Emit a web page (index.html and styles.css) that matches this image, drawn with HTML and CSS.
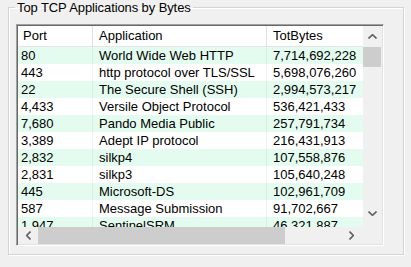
FILE: index.html
```html
<!DOCTYPE html>
<html lang="en">
<head>
    <meta charset="UTF-8">
    <title>Top TCP Applications by Bytes</title>
    <link rel="stylesheet" href="styles.css">
</head>
<body>
    <fieldset class="group">
        <legend>Top TCP Applications by Bytes</legend>
        <div class="list">
            <div class="table-area">
                <div class="row head">
                    <div class="cell">Port</div>
                    <div class="cell">Application</div>
                    <div class="cell">TotBytes</div>
                </div>
                <div class="row"><div class="cell">80</div><div class="cell">World Wide Web HTTP</div><div class="cell">7,714,692,228</div></div>
                <div class="row"><div class="cell">443</div><div class="cell">http protocol over TLS/SSL</div><div class="cell">5,698,076,260</div></div>
                <div class="row"><div class="cell">22</div><div class="cell">The Secure Shell (SSH)</div><div class="cell">2,994,573,217</div></div>
                <div class="row"><div class="cell">4,433</div><div class="cell">Versile Object Protocol</div><div class="cell">536,421,433</div></div>
                <div class="row"><div class="cell">7,680</div><div class="cell">Pando Media Public</div><div class="cell">257,791,734</div></div>
                <div class="row"><div class="cell">3,389</div><div class="cell">Adept IP protocol</div><div class="cell">216,431,913</div></div>
                <div class="row"><div class="cell">2,832</div><div class="cell">silkp4</div><div class="cell">107,558,876</div></div>
                <div class="row"><div class="cell">2,831</div><div class="cell">silkp3</div><div class="cell">105,640,248</div></div>
                <div class="row"><div class="cell">445</div><div class="cell">Microsoft-DS</div><div class="cell">102,961,709</div></div>
                <div class="row"><div class="cell">587</div><div class="cell">Message Submission</div><div class="cell">91,702,667</div></div>
                <div class="row"><div class="cell">1,947</div><div class="cell">SentinelSRM</div><div class="cell">46,321,887</div></div>
            </div>

            <div class="vscroll">
                <div class="arrow up">
                    <svg width="9" height="5" viewBox="0 0 9 5"><path d="M0.5 4.5 L4.5 0.7 L8.5 4.5" /></svg>
                </div>
                <div class="thumb"></div>
                <div class="track"></div>
                <div class="arrow down">
                    <svg width="9" height="5" viewBox="0 0 9 5"><path d="M0.5 0.5 L4.5 4.3 L8.5 0.5" /></svg>
                </div>
            </div>

            <div class="hscroll">
                <div class="arrow left">
                    <svg width="5" height="9" viewBox="0 0 5 9"><path d="M4.5 0.5 L0.7 4.5 L4.5 8.5" /></svg>
                </div>
                <div class="thumb"></div>
                <div class="track"></div>
                <div class="arrow right">
                    <svg width="5" height="9" viewBox="0 0 5 9"><path d="M0.5 0.5 L4.3 4.5 L0.5 8.5" /></svg>
                </div>
            </div>
            <div class="corner"></div>
        </div>
    </fieldset>
</body>
</html>
```

FILE: styles.css
```css
body {
    margin: 0;
    width: 411px;
    height: 267px;
    overflow: hidden;
    background: #f0f0f0;
    font-family: "Liberation Sans", Arial, sans-serif;
    font-size: 13px;
    color: #000;
}

.group {
    margin: 0 7px 0 8px;
    padding: 0;
    height: 255px;
    box-sizing: border-box;
    border: 1px solid #d5d5d5;
    box-shadow: 1px 1px 0 #fff, inset 1px 1px 0 #fff;
}
.group legend {
    margin-left: 6px;
    padding: 0 2px;
    line-height: 15px;
    letter-spacing: -0.1px;
}

.list {
    margin: 9px 0 0 7px;
    width: 368px;
    height: 222px;
    box-sizing: border-box;
    border: 1px solid;
    border-color: #a0a0a0 #fff #fff #a0a0a0;
    box-shadow: inset 1px 1px 0 #696969, inset -1px -1px 0 #e3e3e3;
    padding: 1px;
    display: grid;
    grid-template-columns: 345px 19px;
    grid-template-rows: 201px 17px;
    background: #fff;
}

/* list view */
.table-area {
    overflow: hidden;
    background: #fff;
}
.row {
    display: grid;
    grid-template-columns: 75px 174px 120px;
    height: 17px;
    line-height: 18px;
    white-space: nowrap;
}
.row:nth-child(even) {
    background: #e3fcef;
}
.row .cell {
    padding-left: 6px;
    border-right: 1px solid rgba(0,0,0,0.05);
    overflow: hidden;
}
.row .cell:first-child {
    padding-left: 3px;
}
.row.head {
    height: 21px;
    line-height: 20px;
    background: #fff;
}
.row.head .cell {
    border-right: 1px solid #e0e0e0;
    border-bottom: 1px solid #e5e5e5;
    padding-left: 6px;
}
.row.head .cell:first-child {
    padding-left: 5px;
}

/* scrollbars */
.vscroll, .hscroll, .corner {
    background: #f0f0f0;
}
.vscroll {
    display: flex;
    flex-direction: column;
}
.hscroll {
    display: flex;
}
.arrow {
    display: flex;
    align-items: center;
    justify-content: center;
    flex: none;
}
.arrow path {
    fill: none;
    stroke: #606060;
    stroke-width: 1.6;
}
.vscroll .arrow.up {
    height: 21px;
}
.vscroll .arrow.down {
    height: 21px;
    padding-bottom: 6px;
    box-sizing: border-box;
}
.vscroll .thumb {
    height: 20px;
    margin: 0 1px 0 0;
    background: #cdcdcd;
}
.track {
    flex: 1;
}
.hscroll .arrow.left {
    width: 20px;
}
.hscroll .arrow.right {
    width: 24px;
}
.hscroll .thumb {
    width: 247px;
    background: #cdcdcd;
}
```
